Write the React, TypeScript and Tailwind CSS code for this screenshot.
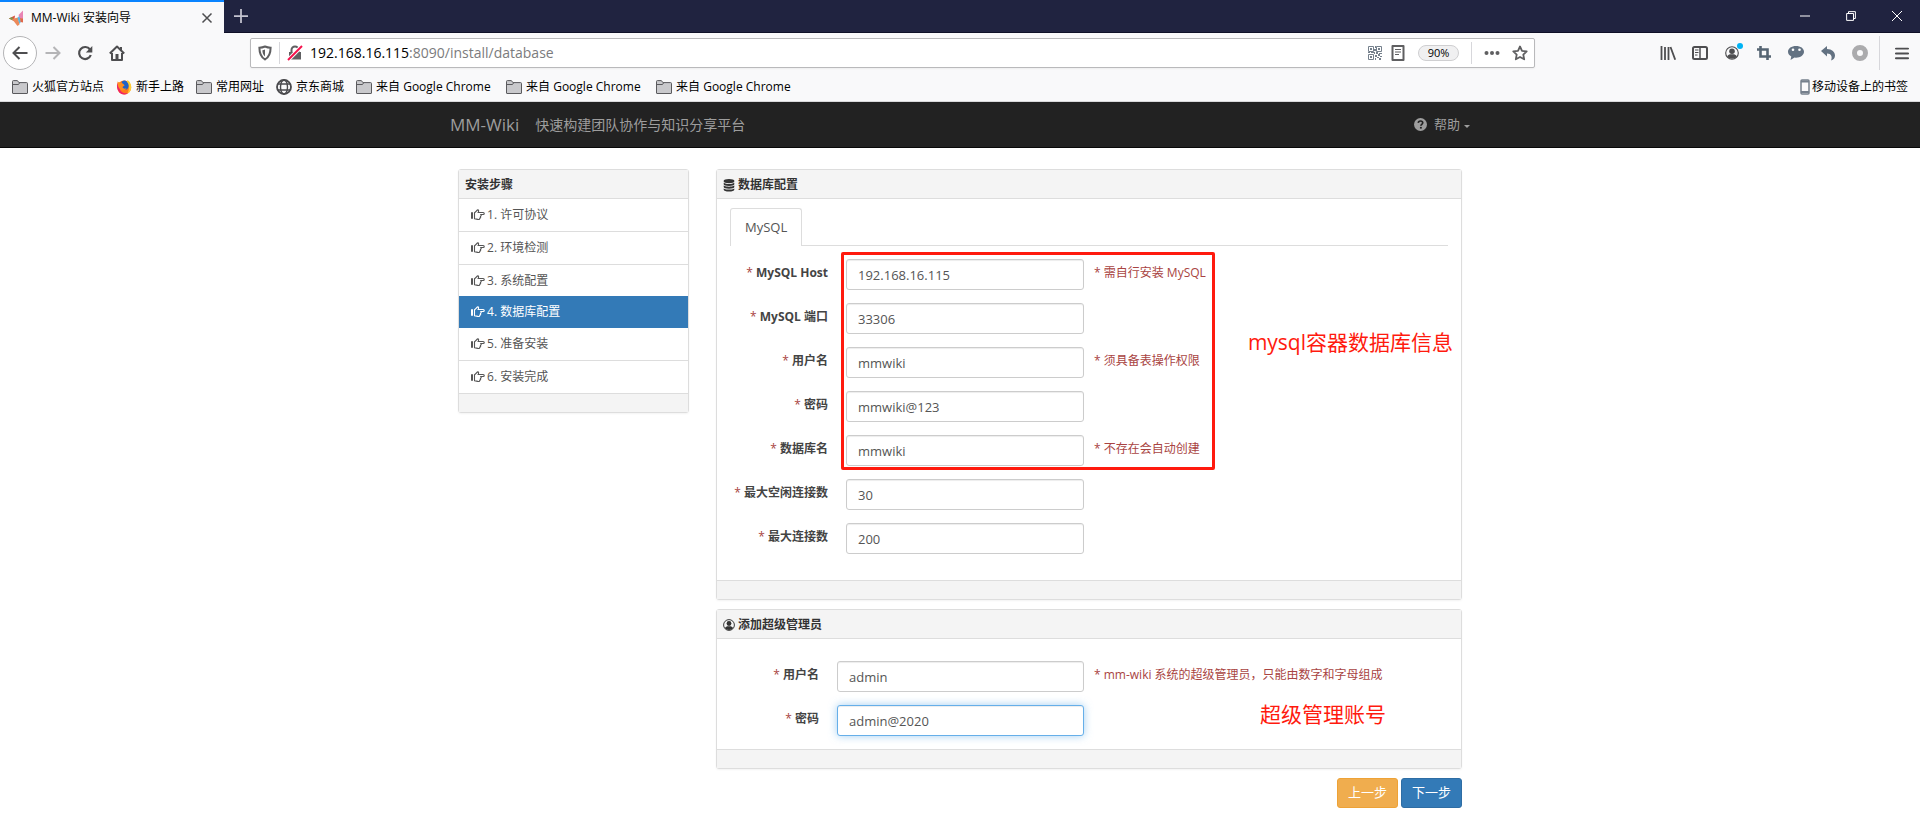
import type { ReactNode } from 'react';
import { clsx } from 'clsx';

interface Bookmark {
    label: string;
    icon: 'folder' | 'firefox' | 'globe';
    imported?: boolean;
}

interface Field {
    id: string;
    label: string;
    value: string;
    hint?: string;
    focused?: boolean;
}

const bookmarks: Bookmark[] = [
    { label: '火狐官方站点', icon: 'folder' },
    { label: '新手上路', icon: 'firefox' },
    { label: '常用网址', icon: 'folder' },
    { label: '京东商城', icon: 'globe' },
    { label: '来自 Google Chrome', icon: 'folder', imported: true },
    { label: '来自 Google Chrome', icon: 'folder', imported: true },
    { label: '来自 Google Chrome', icon: 'folder', imported: true },
];

const steps = ['许可协议', '环境检测', '系统配置', '数据库配置', '准备安装', '安装完成'];
const activeStep = 3;

const serverFields: Field[] = [
    { id: 'host', label: 'MySQL Host', value: '192.168.16.115', hint: '需自行安装 MySQL' },
    { id: 'port', label: 'MySQL 端口', value: '33306' },
    { id: 'user', label: '用户名', value: 'mmwiki', hint: '须具备表操作权限' },
    { id: 'pass', label: '密码', value: 'mmwiki@123' },
    { id: 'name', label: '数据库名', value: 'mmwiki', hint: '不存在会自动创建' },
];

const poolFields: Field[] = [
    { id: 'max_idle', label: '最大空闲连接数', value: '30' },
    { id: 'max_conn', label: '最大连接数', value: '200' },
];

const adminFields: Field[] = [
    { id: 'admin_name', label: '用户名', value: 'admin', hint: 'mm-wiki 系统的超级管理员，只能由数字和字母组成' },
    { id: 'admin_pass', label: '密码', value: 'admin@2020', focused: true },
];

/* ---------- icons ---------- */

function Icon({ children, className = 'size-4' }: { children: ReactNode; className?: string }) {
    return (
        <svg viewBox="0 0 16 16" className={clsx('shrink-0', className)} fill="none" stroke="currentColor" strokeWidth="2" aria-hidden="true">
            {children}
        </svg>
    );
}

function LogoIcon() {
    return (
        <Icon>
            <path d="M.8 8.500L7 5.500 6 11z" fill="#d9503c" stroke="none" />
            <path d="M.8 8.500l3.500-1.500 1 3.500z" fill="#7d9a4a" stroke="none" />
            <path d="M4 9l6-1.500 1.500 7-2 1.500z" fill="#ec8a5a" stroke="none" />
            <path d="M9.500 8l2.500-3 .8 7-1.300 2z" fill="#5bb7e0" stroke="none" />
            <path d="M10.500 5L15 .5V9l-3.200-1z" fill="#e884b4" stroke="none" />
            <path d="M12 8l3 .5v4l-2.500-.5z" fill="#e0694a" stroke="none" />
        </Icon>
    );
}

function FolderIcon() {
    return (
        <Icon>
            <path d="M.5 14V2.500q0-.9.9-.9h4l1.500 2h7.700q.9 0 .9.9V14q0 .5-.5.5H1q-.5 0-.5-.5z" fill="#c9c9cc" stroke="#5a5a5d" strokeWidth="1" />
            <path d="M1 5.500h5.500l1-1.500" stroke="#5a5a5d" strokeWidth="1" />
        </Icon>
    );
}

function FirefoxIcon() {
    return (
        <Icon>
            <circle cx="8.200" cy="8.500" r="7" fill="#ff7a1a" stroke="none" />
            <path d="M11.500 1c2.800 2 3.900 4.500 3.700 7.800a7 7 0 0 1-4 6c2-3 2.600-8-.4-11z" fill="#ffcf33" stroke="none" />
            <path d="M1.500 3.500C.5 6.500.8 10 3 12.900c2 2.600 6 3.500 9 1.300-3 .5-6.500 0-8-3.500z" fill="#f0206a" stroke="none" />
            <path d="M6 2.500C8 1 10 1.500 11 3c2.500 2.500 2 6.500-.5 7.500-3 1.200-6-1-5.500-4z" fill="#1f63c7" stroke="none" />
            <path d="M1.500 2.500c1.500 1.300 3 1 4.500 1.500l2.700 2.200L6.500 8c.6 1.800 2.600 2 4 1.200-1 2.600-5 3.100-7 .3C1.700 7.500 1.500 5 1.500 2.500z" fill="#ff8f1f" stroke="none" />
        </Icon>
    );
}

function GlobeIcon() {
    return (
        <Icon>
            <g stroke="#4a4a4d" strokeWidth="1.400">
                <circle cx="8" cy="8" r="7" strokeWidth="1.800" />
                <ellipse cx="8" cy="8" rx="3.500" ry="7" />
                <path d="M2 5h12M2 11h12" />
            </g>
        </Icon>
    );
}

function HandIcon() {
    return (
        <svg viewBox="0 0 14 12" className="h-3 w-3.5 shrink-0" fill="none" stroke="currentColor" aria-hidden="true">
            <path d="M1 3.200v6.600" strokeWidth="2" />
            <path d="M3.500 3.500c1.500 0 1.900-2.300 3.200-2.600 1.200 0 1.200 1.500.3 2.600h5.200c1.400 0 1.400 2 0 2H9.600c1 .5.8 1.700-.2 1.800.6.8.2 1.600-.7 1.700.3 1-.3 1.500-1.200 1.500-1.600 0-2.200-.8-4-.8z" strokeWidth="1.100" strokeLinejoin="round" />
        </svg>
    );
}

function DatabaseIcon() {
    return (
        <svg viewBox="0 0 12 14" className="h-3.5 w-3 shrink-0" fill="currentColor" aria-hidden="true">
            <path d="M6 1c3 0 5.300.8 5.300 1.800v.7C11.300 4.500 9 5.200 6 5.200S.7 4.500.7 3.500v-.7C.7 1.800 3 1 6 1z" />
            <path d="M.7 4.800C2 5.600 4 6 6 6s4-.4 5.300-1.200v1.500C11.300 7.200 9 8 6 8S.7 7.200.7 6.300z" />
            <path d="M.7 7.600C2 8.400 4 8.800 6 8.800s4-.4 5.300-1.200v1.500c0 .9-2.300 1.700-5.300 1.700S.7 10 .7 9.100z" />
            <path d="M.7 10.400c1.300.8 3.300 1.200 5.300 1.200s4-.4 5.300-1.200v1.300c0 1-2.300 1.800-5.300 1.800S.7 12.700.7 11.700z" />
        </svg>
    );
}

function UserIcon({ className = 'size-3' }: { className?: string }) {
    return (
        <Icon className={className}>
            <circle cx="8" cy="8" r="7.200" strokeWidth="1.300" />
            <circle cx="8" cy="6" r="3.200" fill="currentColor" stroke="none" />
            <path d="M2.500 12c1-2 3-2.500 3.700-2.500h3.600c.7 0 2.700.5 3.700 2.500-1 1.500-3 2.600-5.500 2.600S3.500 13.500 2.500 12z" fill="currentColor" stroke="none" />
        </Icon>
    );
}

function QrIcon() {
    return (
        <svg viewBox="0 0 14 14" className="size-3.5 shrink-0" fill="none" stroke="#75808c" aria-hidden="true">
            <path d="M.5.5h5v5h-5zM8.500.5h5v5h-5zM.5 8.500h5v5h-5z" />
            <path d="M2 2h2v2H2zM10 2h2v2h-2zM2 10h2v2H2zM7 0h1v2H7zM6 3h2v2H6zM0 6h2v1H0zM3 6h4v2H6V7H3zM8 6h2v2H8zM11 7h3v1h-3zM7 9h2v2H7zM10 8h2v2h-2zM12 10h2v1h-2zM9 11h2v1H9zM7 12h1v2H7zM11 12h2v2h-2z" fill="#75808c" stroke="none" />
        </svg>
    );
}

/* ---------- browser ---------- */

function ToolButton({ label, children, className }: { label: string; children: ReactNode; className?: string }) {
    return (
        <button type="button" aria-label={label} className={clsx('relative flex size-8 items-center justify-center text-[#4e4e50]', className)}>
            {children}
        </button>
    );
}

function TabStrip() {
    return (
        <div className="flex h-[33px] items-stretch border-b border-[#0f1027] bg-[#202340]">
            <div className="-mb-px flex w-56 items-center gap-[7px] border-t-2 border-[#0a84ff] bg-[#f9f9fa] pr-2.5 pl-2">
                <LogoIcon />
                <span className="flex-1 text-xs text-black">MM-Wiki 安装向导</span>
                <button type="button" aria-label="关闭标签页" className="flex size-3.5 items-center justify-center text-[#4e4e50]">
                    <Icon className="size-3"><path d="M2 2l12 12M14 2L2 14" /></Icon>
                </button>
            </div>
            <button type="button" aria-label="新标签页" className="flex w-[34px] items-center justify-center text-[#c4c4d0]">
                <Icon className="size-3.5"><path d="M8 0v16M0 8h16" /></Icon>
            </button>
            <div className="ml-auto flex text-white">
                <button type="button" aria-label="最小化" className="flex w-[46px] items-center justify-center">
                    <Icon className="size-2.5"><path d="M0 8h16" strokeWidth="1.600" /></Icon>
                </button>
                <button type="button" aria-label="还原" className="flex w-[46px] items-center justify-center">
                    <Icon className="size-2.5"><path d="M1 4h11v11H1zM4 4V1h11v11h-3" strokeWidth="1.600" /></Icon>
                </button>
                <button type="button" aria-label="关闭" className="flex w-[46px] items-center justify-center">
                    <Icon className="size-2.5"><path d="M0 0l16 16M16 0L0 16" strokeWidth="1.600" /></Icon>
                </button>
            </div>
        </div>
    );
}

function AddressBar() {
    return (
        <div className="ml-[117px] flex h-[30px] w-[1285px] min-w-0 shrink items-center rounded-xs border border-[#b9b9bb] bg-white pr-1.5 pl-1.5 text-[#5f5f61] shadow-xs">
            <span className="flex w-[22px]">
                <Icon className="size-4">
                    <path d="M8 1.500c2 .9 3.800 1.200 5.600 1.200 0 5-.8 9-5.600 11.800C3.200 11.700 2.400 7.700 2.400 2.700 4.200 2.700 6 2.400 8 1.500z" />
                    <path d="M8 4.500v7C5.800 9.500 5.500 7.500 5.400 5.200 6.400 5.100 7.200 4.900 8 4.500z" fill="currentColor" stroke="none" />
                </Icon>
            </span>
            <span className="h-[22px] w-px bg-[#d7d7db]" />
            <span className="flex w-[30px] justify-center">
                <Icon className="size-4">
                    <path d="M4.500 8V5a3.500 3.500 0 0 1 7 0v3" />
                    <path d="M2 7h12v7.500H2z" fill="currentColor" stroke="none" />
                    <path d="M1 15L15 1" stroke="#fff" strokeWidth="4" />
                    <path d="M1 15L15 1" stroke="#f5124c" />
                </Icon>
            </span>
            <span className="flex-1 truncate text-sm text-[#7b7b7d]">
                <span className="text-black">192.168.16.115</span>:8090/install/database
            </span>
            <QrIcon />
            <span className="ml-2 flex">
                <Icon className="size-4">
                    <path d="M2.500 1h11v14h-11z" strokeLinejoin="round" />
                    <path d="M5 4.500h6M5 7h6M5 9.500h4" strokeWidth="1" />
                </Icon>
            </span>
            <button type="button" className="ml-3 h-4 w-[41px] rounded-full border border-[#cfcfd1] bg-[#f0f0f1] text-[11px] leading-3 text-black">90%</button>
            <span className="ml-3 h-[22px] w-px bg-[#d7d7db]" />
            <button type="button" aria-label="页面操作" className="ml-3 flex">
                <Icon className="size-4">
                    <g fill="currentColor" stroke="none">
                        <circle cx="2.500" cy="8" r="2" />
                        <circle cx="8" cy="8" r="2" />
                        <circle cx="13.500" cy="8" r="2" />
                    </g>
                </Icon>
            </button>
            <button type="button" aria-label="添加书签" className="ml-3 flex">
                <Icon className="size-4"><path d="M8 1.500l2 4.300 4.700.6-3.400 3.200.9 4.700L8 12l-4.200 2.300.9-4.700L1.300 6.400 6 5.800z" strokeLinejoin="round" strokeWidth="1.800" /></Icon>
            </button>
        </div>
    );
}

function Toolbar() {
    return (
        <div className="flex h-10 items-center pr-0.5 pl-[3px]">
            <button type="button" aria-label="后退" className="flex size-[34px] shrink-0 items-center justify-center rounded-full border border-[#b4b4b6] bg-white text-[#4e4e50]">
                <Icon><path d="M15.500 8H1.500M7.500 2L1.500 8l6 6" /></Icon>
            </button>
            <ToolButton label="前进" className="text-[#b5b5b7]!">
                <Icon><path d="M.5 8h14M8.500 2l6 6-6 6" /></Icon>
            </ToolButton>
            <ToolButton label="刷新">
                <Icon>
                    <path d="M13 4.500A6 6 0 1 0 13.800 10" strokeWidth="2.200" />
                    <path d="M15.300 1v6.500H8.800z" fill="currentColor" stroke="none" />
                </Icon>
            </ToolButton>
            <ToolButton label="主页">
                <Icon>
                    <path d="M.8 8.500L8 1.500l7.200 7M3 8v7h10V8" strokeLinejoin="round" />
                    <path d="M6.500 9h3v6h-3z" fill="currentColor" stroke="none" />
                    <path d="M11 2h2v4l-2-2z" fill="currentColor" stroke="none" />
                </Icon>
            </ToolButton>
            <AddressBar />
            <div className="ml-auto flex items-center">
                <ToolButton label="书库">
                    <Icon><path d="M1.500 1v14M5 2v13M8.500 2v13M10.500 2l4.700 12.800" strokeWidth="1.800" /></Icon>
                </ToolButton>
                <ToolButton label="侧栏">
                    <Icon>
                        <rect x="1" y="2" width="14" height="12" rx="1.500" />
                        <path d="M8 2v12" strokeWidth="1.500" />
                        <path d="M3 5h3.500M3 7.500h3.500M3 10h2.500" strokeWidth="1" />
                    </Icon>
                </ToolButton>
                <ToolButton label="账户">
                    <UserIcon className="size-3.5" />
                    <span className="absolute top-1.5 right-[5px] size-1.5 rounded-full bg-[#00b3f4]" />
                </ToolButton>
                <ToolButton label="截图" className="text-[#566573]!">
                    <Icon><path d="M4.500 1v10.500H15M1 4.500h10.500V15" strokeWidth="2.600" /></Icon>
                </ToolButton>
                <ToolButton label="聊天" className="text-[#637282]!">
                    <Icon>
                        <path d="M8 1c4.500 0 8 2.400 8 5.800s-3.500 5.900-8 5.900l-1.500-.1L2.500 15l.8-3.500C1.300 10.500 0 9 0 6.800 0 3.400 3.500 1 8 1z" fill="currentColor" stroke="none" />
                        <circle cx="5" cy="4.800" r="1.300" fill="#fff" stroke="none" />
                        <circle cx="11.500" cy="4.800" r="1.300" fill="#fff" stroke="none" />
                    </Icon>
                </ToolButton>
                <ToolButton label="撤销" className="text-[#637282]!">
                    <Icon><path d="M1 6l6-5v3c5 0 8 3 8 6.500 0 2.500-1.500 4.500-4 5 1.500-3.500.5-7-4-7v3z" fill="currentColor" stroke="none" /></Icon>
                </ToolButton>
                <ToolButton label="扩展" className="text-[#ababad]!">
                    <Icon><circle cx="8" cy="8" r="5.500" strokeWidth="5" /></Icon>
                </ToolButton>
                <span className="mr-1.5 ml-[3px] h-[34px] w-px bg-[#d7d7db]" />
                <ToolButton label="菜单">
                    <Icon className="size-3.5"><path d="M1 3h14M1 8.500h14M1 14h14" strokeWidth="2.200" strokeLinecap="round" /></Icon>
                </ToolButton>
            </div>
        </div>
    );
}

function BookmarkBar() {
    return (
        <div className="flex h-[29px] items-center gap-3 border-b border-[#d9d9db] px-3 text-xs whitespace-nowrap text-black">
            {bookmarks.map((bookmark, index) => (
                <a key={index} href="#" className={clsx('flex items-center gap-1', bookmark.imported && 'min-w-[138px]')}>
                    {bookmark.icon === 'folder' && <FolderIcon />}
                    {bookmark.icon === 'firefox' && <FirefoxIcon />}
                    {bookmark.icon === 'globe' && <GlobeIcon />}
                    {bookmark.label}
                </a>
            ))}
            <a href="#" className="ml-auto flex items-center gap-0.5">
                <svg viewBox="0 0 10 16" className="h-4 w-2.5" fill="none" stroke="#75808c" aria-hidden="true">
                    <rect x="1" y="1" width="8" height="14" rx="1" strokeWidth="1.500" />
                    <path d="M1 2.500h8M1 13h8" strokeWidth="2" />
                </svg>
                移动设备上的书签
            </a>
        </div>
    );
}

/* ---------- install page ---------- */

function Panel({ title, icon, children }: { title: string; icon?: ReactNode; children: ReactNode }) {
    return (
        <section className="rounded-[3px] border border-[#ddd] bg-white shadow-xs">
            <h3 className="flex h-[29px] items-center gap-[3px] border-b border-[#ddd] bg-[#f4f4f4] px-1.5 pt-0.5 text-xs font-bold text-[#333]">
                {icon}
                {title}
            </h3>
            {children}
            <div className="h-[19px] border-t border-[#ddd] bg-[#f4f4f4]" />
        </section>
    );
}

function FieldRow({ field, wide }: { field: Field; wide?: boolean }) {
    return (
        <div className="flex h-[31px] items-start">
            <label htmlFor={field.id} className={clsx('shrink-0 pt-1 text-right text-xs leading-5 font-bold text-[#444]', wide ? 'w-[89px]' : 'w-[98px]')}>
                <span className="font-normal text-[#a94442]">*</span> {field.label}
            </label>
            <input
                id={field.id}
                type="text"
                defaultValue={field.value}
                className={clsx(
                    'ml-[18px] h-[31px] rounded-[3px] border bg-white px-[11px] text-[13px] text-[#555] outline-none',
                    wide ? 'w-[247px]' : 'w-[238px]',
                    field.focused
                        ? 'border-[#66afe9] shadow-[inset_0_1px_1px_rgba(0,0,0,0.075),0_0_8px_rgba(102,175,233,0.6)]'
                        : 'border-[#ccc] shadow-[inset_0_1px_1px_rgba(0,0,0,0.075)]',
                )}
            />
            {field.hint && <span className="ml-2.5 pt-1 text-xs leading-5 whitespace-nowrap text-[#a94442]">* {field.hint}</span>}
        </div>
    );
}

function Navbar() {
    return (
        <nav className="h-[46px] border-b border-[#080808] bg-[#222] text-[#9d9d9d]">
            <div className="mx-auto flex h-full max-w-[1020px] items-center">
                <a href="#" className="text-[17px]">MM-Wiki</a>
                <span className="ml-4 text-sm">快速构建团队协作与知识分享平台</span>
                <button type="button" className="ml-auto flex items-center text-[13px]">
                    <svg viewBox="0 0 14 14" className="mr-[7px] size-[13px]" aria-hidden="true">
                        <circle cx="7" cy="7" r="7" fill="#9d9d9d" />
                        <path d="M4.600 5.300C4.700 3.800 5.700 3.200 7 3.200s2.400.7 2.400 2c0 1.600-2 1.600-2 3.200" fill="none" stroke="#222" strokeWidth="1.800" />
                        <path d="M6.400 9.600h2v1.800h-2z" fill="#222" />
                    </svg>
                    帮助
                    <span className="mt-1 ml-1 border-x-3 border-t-3 border-x-transparent border-t-[#9d9d9d]" />
                </button>
            </div>
        </nav>
    );
}

function StepList() {
    return (
        <ol className="flex h-[194px] flex-col">
            {steps.map((step, index) => (
                <li
                    key={step}
                    className={clsx(
                        'flex flex-1 items-center gap-0.5 px-3 text-xs',
                        index === activeStep ? 'bg-[#337ab7] text-white' : 'text-[#555]',
                        index > 0 && index !== activeStep && index !== activeStep + 1 && 'border-t border-[#ddd]',
                    )}
                >
                    <HandIcon />
                    <a href="#">{index + 1}. {step}</a>
                </li>
            ))}
        </ol>
    );
}

export default function App() {
    return (
        <div className="min-h-screen bg-white font-['Open_Sans','Noto_Sans_CJK_SC',sans-serif]">
            <header className="bg-[#f9f9fa]">
                <TabStrip />
                <Toolbar />
                <BookmarkBar />
            </header>
            <Navbar />
            <main className="mx-auto mt-[21px] grid max-w-[1004px] grid-cols-[231px_1fr] items-start gap-[27px]">
                <Panel title="安装步骤">
                    <StepList />
                </Panel>
                <form onSubmit={(e) => e.preventDefault()}>
                    <Panel title="数据库配置" icon={<DatabaseIcon />}>
                        <div className="relative px-[13px] pt-[9px] pb-[26px]">
                            <div className="flex border-b border-[#ddd]">
                                <button type="button" className="-mb-px h-[38px] rounded-t-[3px] border border-b-0 border-[#ddd] bg-white px-3.5 text-[13px] text-[#555]">MySQL</button>
                            </div>
                            <div className="relative mt-[13px] flex flex-col gap-[13px]">
                                {serverFields.map((field) => <FieldRow key={field.id} field={field} />)}
                                <span className="pointer-events-none absolute -top-[7px] left-[111px] h-[218px] w-[374px] rounded-xs border-3 border-[#ff1a0e]" />
                            </div>
                            <div className="mt-[13px] flex flex-col gap-[13px]">
                                {poolFields.map((field) => <FieldRow key={field.id} field={field} />)}
                            </div>
                            <p className="absolute top-[129px] right-2 text-[21px] leading-7 text-[#ff1a0e]">mysql容器数据库信息</p>
                        </div>
                    </Panel>
                    <div className="mt-[9px]">
                        <Panel title="添加超级管理员" icon={<UserIcon />}>
                            <div className="relative flex flex-col gap-[13px] px-[13px] pt-[22px] pb-[13px]">
                                {adminFields.map((field) => <FieldRow key={field.id} field={field} wide />)}
                                <p className="absolute top-[61px] right-[75px] text-[21px] leading-7 text-[#ff1a0e]">超级管理账号</p>
                            </div>
                        </Panel>
                    </div>
                    <div className="mt-[9px] flex justify-end gap-[3px] text-[13px] text-white">
                        <button type="button" className="h-[30px] rounded-[3px] border border-[#eea236] bg-[#f0ad4e] px-2.5">上一步</button>
                        <button type="submit" className="h-[30px] rounded-[3px] border border-[#2e6da4] bg-[#337ab7] px-2.5">下一步</button>
                    </div>
                </form>
            </main>
        </div>
    );
}
